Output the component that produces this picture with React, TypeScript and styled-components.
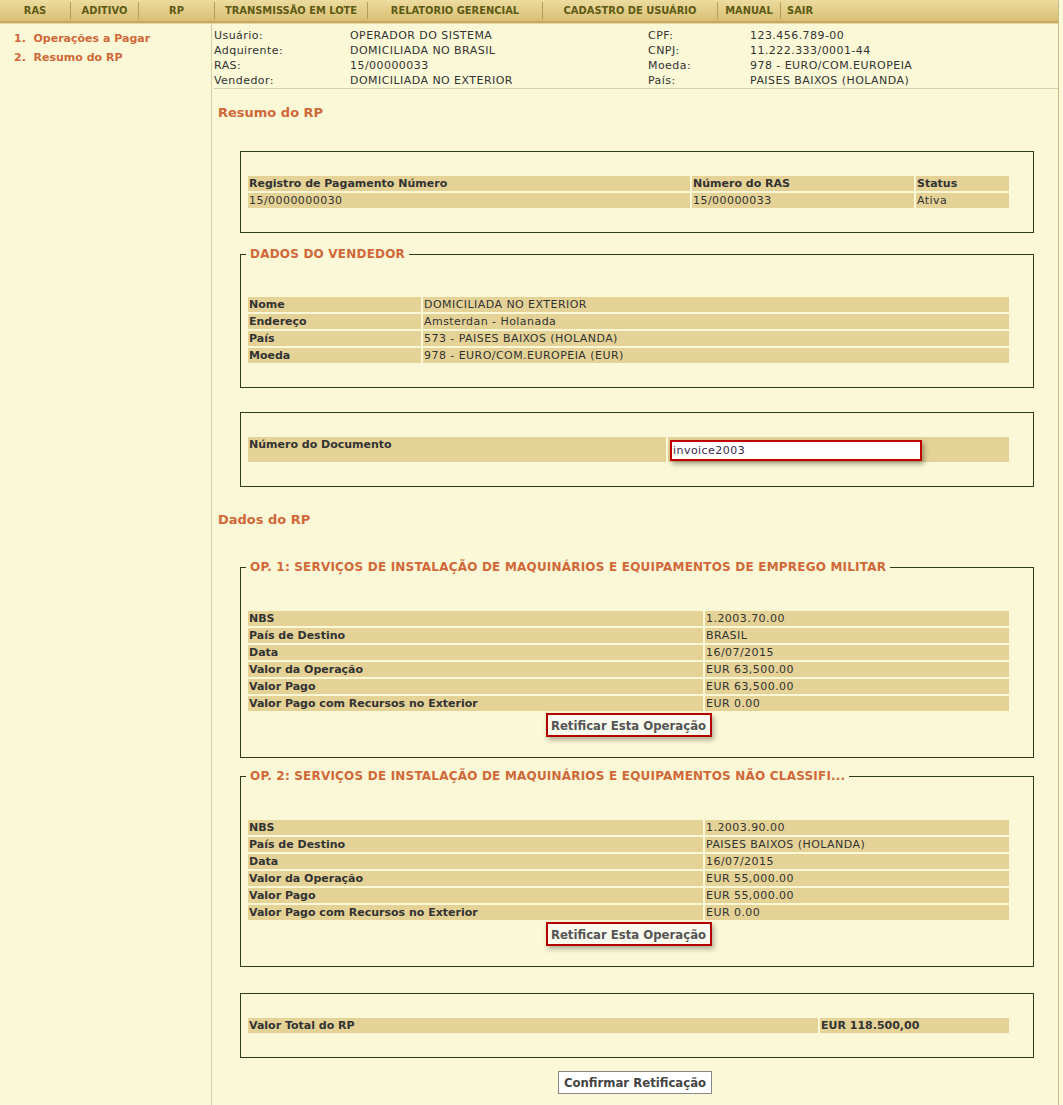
import React from "react";
import styled, { createGlobalStyle } from "styled-components";

const GlobalStyle = createGlobalStyle`
  html, body { margin: 0; padding: 0; }
  body {
    background: #faf8d6;
    font-family: "DejaVu Sans", Verdana, sans-serif;
    font-size: 11px;
    color: #333;
  }
`;

const Page = styled.div`
  width: 1059px;
  min-height: 1105px;
  box-sizing: border-box;
  border-right: 1px solid #c9ba8c;
  display: flex;
  flex-direction: column;
`;

const NavBar = styled.nav`
  display: flex;
  height: 21px;
  background: linear-gradient(#ecdc9f, #d9bf74);
  border-bottom: 2px solid #c6a95f;
  box-shadow: 0 1px 0 #e6d9a6;
`;

const NavItem = styled.a<{ $w?: number; $left?: boolean }>`
  display: block;
  ${(p) => (p.$w ? `width: ${p.$w}px;` : "flex: 1;")}
  box-sizing: border-box;
  text-align: ${(p) => (p.$left ? "left" : "center")};
  padding-left: ${(p) => (p.$left ? "6px" : "0")};
  font-family: "DejaVu Sans Condensed", "DejaVu Sans", sans-serif;
  font-stretch: condensed;
  font-weight: bold;
  font-size: 11px;
  color: #5d5a15;
  text-decoration: none;
  border-right: ${(p) => (p.$w ? "1px solid #b79d58" : "none")};
  margin: 2px 0 2px;
  line-height: 17px;
`;

const Body = styled.div`
  display: flex;
  flex: 1;
`;

const Sidebar = styled.aside`
  width: 211px;
  flex: none;
  border-right: 1px solid #d8cfa6;
  padding-top: 6px;
`;

const SideList = styled.ol`
  margin: 0;
  padding: 0 0 0 14px;
  list-style: none;
`;

const SideLink = styled.li`
  font-weight: bold;
  font-size: 11px;
  line-height: 19px;
  color: #d0683a;
`;

const Main = styled.main`
  flex: 1;
  display: flex;
  flex-direction: column;
`;

const InfoGrid = styled.div`
  display: grid;
  grid-template-columns: 136px 298px 102px 1fr;
  margin-left: 2px;
  padding-top: 5px;
  padding-bottom: 0;
  border-bottom: 1px solid #d8cfa6;
  line-height: 15px;
  letter-spacing: 0.45px;
  color: #333;
`;

const Heading = styled.h2<{ $top: number }>`
  margin: ${(p) => p.$top}px 0 0 6px;
  font-size: 13px;
  line-height: 16px;
  color: #d0683a;
  font-weight: bold;
`;

const Box = styled.fieldset<{ $top: number; $padTop?: number; $padBottom?: number }>`
  width: 794px;
  box-sizing: border-box;
  margin: ${(p) => p.$top}px 0 0 28px;
  border: 1px solid #2f3d12;
  padding: ${(p) => p.$padTop ?? 22}px 21px ${(p) => p.$padBottom ?? 22}px 5px;
  min-width: 0;
`;

const Legend = styled.legend`
  padding: 0 4px;
  font-size: 12px;
  line-height: 16px;
  font-weight: bold;
  letter-spacing: 0.2px;
  color: #d0683a;
`;

const DataTable = styled.table`
  width: 765px;
  table-layout: fixed;
  border-collapse: separate;
  border-spacing: 2px;
`;

const Cell = styled.td<{ $bold?: boolean; $top?: boolean }>`
  background: #e4d297;
  height: 15px;
  padding: 0 1px;
  line-height: 15px;
  font-size: 11px;
  font-weight: ${(p) => (p.$bold ? "bold" : "normal")};
  letter-spacing: ${(p) => (p.$bold ? "0" : "0.45px")};
  color: #333;
  vertical-align: ${(p) => (p.$top ? "top" : "middle")};
  white-space: nowrap;
  overflow: hidden;
`;

const InputCell = styled.td`
  background: #e4d297;
  padding: 3px 0 1px 2px;
  vertical-align: top;
`;

const TextInput = styled.input`
  display: block;
  width: 252px;
  height: 21px;
  box-sizing: border-box;
  border: 2px solid #c00000;
  background: #fff;
  box-shadow: 2px 3px 5px rgba(0, 0, 0, 0.35);
  font-family: "DejaVu Sans", Verdana, sans-serif;
  font-size: 11px;
  letter-spacing: 0.45px;
  color: #3a2a4a;
  padding: 0 1px;
  outline: none;
`;

const Actions = styled.div`
  width: 765px;
  display: flex;
  justify-content: center;
`;

const RetifyButton = styled.button`
  width: 166px;
  height: 24px;
  box-sizing: border-box;
  border: 2px solid #b30000;
  background: #fbfaee;
  box-shadow: 2px 3px 5px rgba(0, 0, 0, 0.3);
  font-family: "DejaVu Sans Condensed", "DejaVu Sans", sans-serif;
  font-stretch: condensed;
  font-weight: bold;
  font-size: 13px;
  color: #555;
  padding: 0;
  cursor: pointer;
`;

const Footer = styled.div`
  display: flex;
  justify-content: center;
  margin-top: 13px;
  padding-bottom: 11px;
`;

const ConfirmButton = styled.button`
  width: 154px;
  height: 23px;
  box-sizing: border-box;
  border: 1px solid #888;
  background: #fff;
  font-family: "DejaVu Sans Condensed", "DejaVu Sans", sans-serif;
  font-stretch: condensed;
  font-weight: bold;
  font-size: 13px;
  color: #444;
  padding: 0;
  cursor: pointer;
`;

const navItems: [string, number | undefined, boolean?][] = [
  ["RAS", 71],
  ["ADITIVO", 68],
  ["RP", 76],
  ["TRANSMISSÃO EM LOTE", 153],
  ["RELATORIO GERENCIAL", 175],
  ["CADASTRO DE USUÁRIO", 175],
  ["MANUAL", 63],
  ["SAIR", undefined, true],
];

const info = [
  ["Usuário:", "OPERADOR DO SISTEMA", "CPF:", "123.456.789-00"],
  ["Adquirente:", "DOMICILIADA NO BRASIL", "CNPJ:", "11.222.333/0001-44"],
  ["RAS:", "15/00000033", "Moeda:", "978 - EURO/COM.EUROPEIA"],
  ["Vendedor:", "DOMICILIADA NO EXTERIOR", "País:", "PAISES BAIXOS (HOLANDA)"],
];

const vendedor = [
  ["Nome", "DOMICILIADA NO EXTERIOR"],
  ["Endereço", "Amsterdan - Holanada"],
  ["País", "573 - PAISES BAIXOS (HOLANDA)"],
  ["Moeda", "978 - EURO/COM.EUROPEIA (EUR)"],
];

const ops = [
  {
    title: "OP. 1: SERVIÇOS DE INSTALAÇÃO DE MAQUINÁRIOS E EQUIPAMENTOS DE EMPREGO MILITAR",
    rows: [
      ["NBS", "1.2003.70.00"],
      ["País de Destino", "BRASIL"],
      ["Data", "16/07/2015"],
      ["Valor da Operação", "EUR 63,500.00"],
      ["Valor Pago", "EUR 63,500.00"],
      ["Valor Pago com Recursos no Exterior", "EUR 0.00"],
    ],
  },
  {
    title: "OP. 2: SERVIÇOS DE INSTALAÇÃO DE MAQUINÁRIOS E EQUIPAMENTOS NÃO CLASSIFI...",
    rows: [
      ["NBS", "1.2003.90.00"],
      ["País de Destino", "PAISES BAIXOS (HOLANDA)"],
      ["Data", "16/07/2015"],
      ["Valor da Operação", "EUR 55,000.00"],
      ["Valor Pago", "EUR 55,000.00"],
      ["Valor Pago com Recursos no Exterior", "EUR 0.00"],
    ],
  },
];

const KeyValueTable: React.FC<{ rows: string[][]; labelWidth: number }> = ({ rows, labelWidth }) => (
  <DataTable>
    <colgroup>
      <col style={{ width: labelWidth }} />
      <col />
    </colgroup>
    <tbody>
      {rows.map(([k, v]) => (
        <tr key={k}>
          <Cell $bold>{k}</Cell>
          <Cell>{v}</Cell>
        </tr>
      ))}
    </tbody>
  </DataTable>
);

export default function App() {
  return (
    <>
      <GlobalStyle />
      <Page>
        <NavBar>
          {navItems.map(([label, w, left]) => (
            <NavItem key={label} href="#" $w={w} $left={left}>
              {label}
            </NavItem>
          ))}
        </NavBar>
        <Body>
          <Sidebar>
            <SideList>
              <SideLink>1.&nbsp; Operações a Pagar</SideLink>
              <SideLink>2.&nbsp; Resumo do RP</SideLink>
            </SideList>
          </Sidebar>
          <Main>
            <InfoGrid>
              {info.flat().map((t, i) => (
                <span key={i}>{t}</span>
              ))}
            </InfoGrid>

            <Heading $top={16}>Resumo do RP</Heading>

            <Box $top={30}>
              <DataTable>
                <colgroup>
                  <col style={{ width: 442 }} />
                  <col style={{ width: 222 }} />
                  <col />
                </colgroup>
                <tbody>
                  <tr>
                    <Cell $bold>Registro de Pagamento Número</Cell>
                    <Cell $bold>Número do RAS</Cell>
                    <Cell $bold>Status</Cell>
                  </tr>
                  <tr>
                    <Cell>15/0000000030</Cell>
                    <Cell>15/00000033</Cell>
                    <Cell>Ativa</Cell>
                  </tr>
                </tbody>
              </DataTable>
            </Box>

            <Box $top={13} $padTop={33} $padBottom={22}>
              <Legend>DADOS DO VENDEDOR</Legend>
              <KeyValueTable rows={vendedor} labelWidth={173} />
            </Box>

            <Box $top={24}>
              <DataTable>
                <colgroup>
                  <col style={{ width: 418 }} />
                  <col />
                </colgroup>
                <tbody>
                  <tr>
                    <Cell $bold $top>Número do Documento</Cell>
                    <InputCell>
                      <TextInput defaultValue="invoice2003" />
                    </InputCell>
                  </tr>
                </tbody>
              </DataTable>
            </Box>

            <Heading $top={25}>Dados do RP</Heading>

            {ops.map((op, i) => (
              <Box key={op.title} $top={i === 0 ? 31 : 10} $padTop={34} $padBottom={20}>
                <Legend>{op.title}</Legend>
                <KeyValueTable rows={op.rows} labelWidth={455} />
                <Actions>
                  <RetifyButton type="button">Retificar Esta Operação</RetifyButton>
                </Actions>
              </Box>
            ))}

            <Box $top={26}>
              <DataTable>
                <colgroup>
                  <col style={{ width: 570 }} />
                  <col />
                </colgroup>
                <tbody>
                  <tr>
                    <Cell $bold>Valor Total do RP</Cell>
                    <Cell $bold>EUR 118.500,00</Cell>
                  </tr>
                </tbody>
              </DataTable>
            </Box>

            <Footer>
              <ConfirmButton type="button">Confirmar Retificação</ConfirmButton>
            </Footer>
          </Main>
        </Body>
      </Page>
    </>
  );
}
